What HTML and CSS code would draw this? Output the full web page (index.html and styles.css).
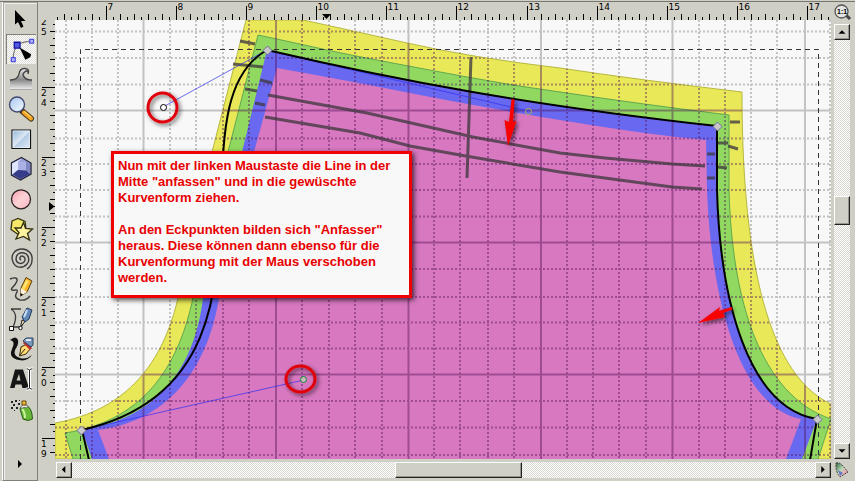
FILE: index.html
```html
<!DOCTYPE html>
<html lang="de">
<head>
<meta charset="utf-8">
<meta name="viewport" content="width=device-width, initial-scale=1">
<title>Kurvenform bearbeiten</title>
<link rel="stylesheet" href="styles.css">
</head>
<body>
<div class="app">
  <nav class="toolbox" aria-label="Werkzeuge">
    <button class="tool" type="button" aria-label="Auswahl"><svg viewBox="0 0 30 30"><path d="M9 6V20.500L12 18L15 24L17.500 22.500L15 17H19.500Z"/></svg></button>
    <button class="tool tool-active" type="button" aria-label="Knoten" aria-pressed="true"><svg viewBox="0 0 30 30"><path d="M6.500 23C7 12 12 7 23 6.500" fill="none" stroke="#777" stroke-width="1.300"/><path d="M4.500 23.500h4v4h-4zM23.500 4.500h4v4h-4z" fill="#b8b8f8" stroke="#5050e0" stroke-width="1.300"/><path d="M7.500 7.500h6v6h-6z" fill="#5058e0" stroke="#1010a0" stroke-width="1.300"/><path d="M13 13L25 20L24 23L19 25.500Z"/></svg></button>
    <button class="tool" type="button" aria-label="Verformen"><svg viewBox="0 0 30 30"><defs><linearGradient id="wave" x2="0" y2="1"><stop offset="0" stop-color="#f2f2f2"/><stop offset=".55" stop-color="#888"/><stop offset="1" stop-color="#eee"/></linearGradient></defs><path d="M4 25.500V16Q12 16 13 10Q14 4 19 4Q24 5 22 9Q22 6 19 8Q17 10 19 13Q21 16 26 16V25.500Z" fill="url(#wave)"/><path d="M4 16Q12 16 13 10Q14 4 19 4.500Q24 5 22 10M22 8Q20 6 19 8M19 8Q15 10 19 14Q21 16 26 16" fill="none" stroke="#444" stroke-width="1.400"/><path d="M4 25.500H26" stroke="#aaa"/></svg></button>
    <button class="tool" type="button" aria-label="Zoom"><svg viewBox="0 0 30 30"><defs><linearGradient id="lens" x2="1" y2="1"><stop offset="0" stop-color="#a8c8f0"/><stop offset="1" stop-color="#f4faff"/></linearGradient></defs><path d="M16 17L25 24.500" stroke="#493b20" stroke-width="6" stroke-linecap="round"/><path d="M18 18.500L25 24.500" stroke="#f8a820" stroke-width="4" stroke-linecap="round"/><path d="M18 17.500L25 23" stroke="#ffe080"/><circle cx="11" cy="10.500" r="7.500" fill="url(#lens)" stroke="#444a70" stroke-width="1.400"/></svg></button>
    <button class="tool" type="button" aria-label="Rechteck"><svg viewBox="0 0 30 30"><defs><linearGradient id="pane" x2="1" y2="1"><stop offset="0" stop-color="#8fb4d6"/><stop offset=".5" stop-color="#dfeaf6"/><stop offset=".52" stop-color="#b3cce4"/><stop offset="1" stop-color="#e4eef8"/></linearGradient></defs><path d="M6 6H24.500V24.500H6Z" fill="url(#pane)" stroke="#111" stroke-width="1.200"/><path d="M7 7H23.500V23.500H7Z" fill="none" stroke="#e8f2fc" stroke-width=".7"/></svg></button>
    <button class="tool" type="button" aria-label="3D-Box"><svg viewBox="0 0 30 30"><path d="M15.500 3.500L25 9V20L14.500 26L5.500 21V9Z" fill="#9ca4dc" stroke="#222238" stroke-width="1.300"/><path d="M15.500 4.500L6 9.500V20.500L12 16V8Z" fill="#dfe4ff"/><path d="M15.500 4.500L24 9.500V19.500L20 17V7.500Z" fill="#8088c4"/><path d="M12 8L20 8V17H12Z" fill="#aab2e4"/><path d="M12 16L20 16.500L24 20L14.500 25L6.500 20.500Z" fill="#363c88"/></svg></button>
    <button class="tool" type="button" aria-label="Ellipse"><svg viewBox="0 0 30 30"><defs><linearGradient id="rose" x2="1" y2="1"><stop offset="0" stop-color="#f79aa8"/><stop offset=".5" stop-color="#fcd2d6"/><stop offset="1" stop-color="#f9b4bd"/></linearGradient></defs><circle cx="15" cy="15.300" r="9.500" fill="url(#rose)" stroke="#2b2222" stroke-width="1.300"/></svg></button>
    <button class="tool" type="button" aria-label="Stern"><svg viewBox="0 0 30 30"><path d="M6 7L12 4.500L19 7.500L20 15L13 21L5 15.500Z" fill="#f4e86a" stroke="#333010" stroke-width="1.300"/><path d="M17.500 8.500L19.500 14.500L26.500 15L21.500 19.500L23.500 26L17.500 22.500L10 25L13 18.500L9 14L15 14Z" fill="#fff3a0" stroke="#333010" stroke-width="1.300"/></svg></button>
    <button class="tool" type="button" aria-label="Spirale"><svg viewBox="0 0 30 30"><path d="M15 16C13 15 14 12 16 12C19 12 20 16 18 18C15 21 10 19 10 15C10 10 14 8 18 9C23 10 24 17 21 20C17 25 9 24 7 18C4 11 9 5 16 5C22 5 27 10 26 16C26 20 24 23 21 25" fill="none" stroke="#3d3d3d" stroke-width="1.400"/></svg></button>
    <button class="tool" type="button" aria-label="Freihand"><svg viewBox="0 0 30 30"><path d="M4 5Q12 2 11 7Q10 10 6 14Q4 17 9 16Q13 15 10 20Q8 24 14 26Q20 27 24 22" fill="none" stroke="#3c3c3c" stroke-width="1.400"/><path d="M14.500 22L15 14L20 3.500L26 7L21 18Z" fill="#f9b428" stroke="#564010"/><path d="M20 6L16 14L18 16L23 7Z" fill="#ffe36c"/><path d="M15 14L21 18L14.500 22Z" fill="#fff2da"/><path d="M14.500 19L17 20.500L14.500 22.500Z"/></svg></button>
    <button class="tool" type="button" aria-label="Bézier"><svg viewBox="0 0 30 30"><path d="M5 5H15M5 5Q13 10 7 23H14Q18 21 17 16" fill="none" stroke="#3c3c3c" stroke-width="1.300"/><path d="M3.500 22.500h4v4h-4z" fill="#fff" stroke="#111"/><path d="M14.500 23L16 16L19 17.500Z" fill="#f7e3b3" stroke="#222"/><path d="M16 13L21 4L26 6L23 15L19 18Z" fill="#6288b8" stroke="#253a5c"/><path d="M18 13L21 6" stroke="#c6dcf3" stroke-width="2"/><circle cx="14.500" cy="24" r="1.700" fill="#fff" stroke="#111"/></svg></button>
    <button class="tool" type="button" aria-label="Kalligrafie"><svg viewBox="0 0 30 30"><path d="M4 6Q10 1 12 6Q13 10 9 16Q7 22 14 24Q20 26 26 21Q21 28 13 26Q2 24 6 15Q10 7 4 6Z" fill="#111"/><path d="M13.500 22L15 13L21 10L24 15L20 20Z" fill="#ffdb73" stroke="#3c2b09"/><path d="M14 21L19 15" stroke="#222"/><path d="M18 8L21 11L25 15" stroke="#c43030" stroke-width="3"/><path d="M17 7L20 4H27V11L25 13Z" fill="#7895ba" stroke="#30445f"/><path d="M20 6H25" stroke="#deebf7" stroke-width="2"/></svg></button>
    <button class="tool" type="button" aria-label="Text"><svg viewBox="0 0 30 30"><path d="M9 5.500H17L23 24H16.500L15.500 20.500H9.500L8.500 24H4ZM10.500 16.500H14.500L13 10Z" fill="#161616" fill-rule="evenodd"/><path d="M20 5H22L23.500 6L25 5H27M23.500 6V24M20 25H22L23.500 24L25 25H27" fill="none" stroke="#fff" stroke-width="3"/><path d="M20.500 5H22L23.500 6L25 5H26.500M23.500 6V24M20.500 25H22L23.500 24L25 25H26.500" fill="none" stroke="#222"/></svg></button>
    <button class="tool" type="button" aria-label="Sprühdose"><svg viewBox="0 0 30 30"><path d="M5 7h2v2h-2zM9 6h2v2h-2zM12 9h2v2h-2zM7 10h2v2h-2zM5 13h2v2h-2zM10 13h2v2h-2zM13 6h1v1h-1zM8 16h1v1h-1z" fill="#222"/><path d="M14 15Q15 11 21 12Q26 14 26.500 25Q22 28 17 25Z" fill="#68b838" stroke="#2b5b16"/><path d="M16 15Q19 18 19 24" stroke="#c7f49f" stroke-width="2" fill="none"/><path d="M15 13Q17 9 22 12L21 14Q18 12 15 15Z" fill="#eee" stroke="#555" stroke-width=".7"/><path d="M16 7H20V11H16Z" fill="#f0b52b" stroke="#664b10"/></svg></button>
    <button class="more" type="button" aria-label="Weitere Werkzeuge"><svg viewBox="0 0 30 30"><path d="M12 12L16 16L12 20Z"/></svg></button>
  </nav>

  <svg class="ruler-top" id="ruler-top" aria-label="Lineal horizontal"><path class="tick" d=""/><path d="M322 14H331L326.500 19Z"/></svg>
  <button class="corner" type="button" aria-label="Zoom 1:1"><svg viewBox="0 0 24 20"><path d="M14 14L19 19" stroke="#444" stroke-width="3"/><circle cx="10.500" cy="11.500" r="6.500" fill="#e4e4e0" stroke="#555" stroke-width="1.300"/><text x="6" y="14">1:1</text></svg></button>

  <svg class="ruler-left" id="ruler-left" aria-label="Lineal vertikal"><path class="tick" d=""/><path d="M49 202L54.500 206.500L49 211Z"/></svg>

  <main class="canvas">
    <svg class="drawing" viewBox="55 20 776 439" preserveAspectRatio="xMinYMin slice" role="img" aria-label="Schnittmuster">
      <defs>
        <path id="outer" d="M246 20H303Q340 28 407 43T560 68Q640 80 742 92C742 240 762 372 831 404V459H55V423C128 410 163 362 178 298L212 152Z"/>
        <g id="grid">
          <path class="minor" d="M66 20V459M92 20V459M118 20V459M170 20V459M196 20V459M223 20V459M249 20V459M302 20V459M329 20V459M355 20V459M382 20V459M434 20V459M460 20V459M488 20V459M514 20V459M567 20V459M593 20V459M619 20V459M646 20V459M699 20V459M725 20V459M751 20V459M777 20V459M830 20V459M55 31.500H831M55 58H831M55 84.500H831M55 138.500H831M55 164H831M55 190H831M55 216.500H831M55 269H831M55 297H831M55 322.500H831M55 348.500H831M55 401H831M55 427.500H831M55 455H831"/>
          <path class="major" d="M143.500 20V459M276 20V459M408.500 20V459M541 20V459M672.500 20V459M805 20V459M55 110.500H831M55 242.500H831M55 374.500H831"/>
        </g>
        <clipPath id="in-outer"><use href="#outer"/></clipPath>
        <filter id="shade" x="-50%" y="-50%" width="200%" height="200%"><feDropShadow dx="2" dy="2" stdDeviation="2" flood-opacity=".6"/></filter>
      </defs>
      <use href="#grid" class="paper-grid"/>
      <use href="#outer" class="seam-yellow"/>
      <path class="seam-green" d="M258 35Q300 44 327 50T467 77Q515 86 560 92Q640 104 729 115V190C732 300 760 395 831 419L818 459H73L65 433C150 420 180 358 193 298L228 152Z"/>
      <path class="seam-blue" d="M267 50C400 81 528 105 717 126V190C720 300 748 408 817 419L802 459H92L82 430C160 418 195 365 203 298L242 152Z"/>
      <path class="seam-pink" d="M277 68Q350 81 410 93T560 120T706 140L707 190C711 300 740 408 801 419L786 459H109L98 430C175 420 209 360 219 298L254 152Z"/>
      <g clip-path="url(#in-outer)"><use href="#grid" class="cloth-grid"/></g>
      <path class="stitch" d="M471 57L467 178M268 95L367 113L473 137L560 153L605 158L672 164L705 166M265 117L360 133L410 146L460 155L560 172L672 187L702 189M240 41L255 44M233 64L263 67M260 80L272 83M245 89L257 91M255 103L265 105M730 122H740M728 146L738 149M718 143H728M707 154H715M718 167L727 168M707 178H715"/>
      <path class="selection" d="M80.500 459V49.500H818.500V459"/>
      <path class="handle-line" d="M267 50L163 107M267 50L528 111M82 430L304 380"/>
      <path class="curve" d="M267 50C400 81 528 105 717 126V190C720 300 748 408 817 419L810 460M267 50C164 107 304 380 82 430L89 460"/>
      <g class="node"><path d="M267.500 46L272 50.500L267.500 55L263 50.500Z"/><path d="M717.500 122L722 126.500L717.500 131L713 126.500Z"/><path d="M817.500 415L822 419.500L817.500 424L813 419.500Z"/><path d="M81.500 426L86 430.500L81.500 435L77 430.500Z"/></g>
      <circle class="knob" cx="163.500" cy="107.500" r="3"/>
      <circle class="knob-green" cx="303.500" cy="379.500" r="3"/>
      <circle class="knob-olive" cx="528.500" cy="111.500" r="3"/>
      <g filter="url(#shade)">
        <circle class="ring" cx="162.500" cy="107.500" r="14.500"/>
        <ellipse class="ring" cx="300.500" cy="379" rx="14.500" ry="13"/>
        <path class="arrow" d="M511.500 99L514.500 99.500L513 122L516.500 121L508 146L504.500 120L509 122Z"/>
        <path class="arrow" d="M731.500 307L732.500 309.500L723 313L725 317L698 323L720 307L719 311Z"/>
      </g>
    </svg>
    <aside class="note">
      <p>Nun mit der linken Maustaste die Line in der<br>Mitte "anfassen" und in die gewüschte<br>Kurvenform ziehen.</p>
      <p>An den Eckpunkten bilden sich "Anfasser"<br>heraus. Diese können dann ebenso für die<br>Kurvenformung mit der Maus verschoben<br>werden.</p>
    </aside>
  </main>

  <div class="scroll scroll-y">
    <button class="step" type="button" aria-label="Nach oben"><svg viewBox="0 0 16 16"><path d="M4 10L8 6L12 10Z"/></svg></button>
    <div class="track y-before"></div><div class="thumb y-thumb"></div><div class="track y-after"></div>
    <button class="step" type="button" aria-label="Nach unten"><svg viewBox="0 0 16 16"><path d="M4 6L8 10L12 6Z"/></svg></button>
  </div>
  <div class="scroll scroll-x">
    <button class="step" type="button" aria-label="Nach links"><svg viewBox="0 0 16 16"><path d="M9.500 3.500L5.500 7.500L9.500 11.500Z"/></svg></button>
    <div class="track x-before"></div><div class="thumb x-thumb"></div><div class="track x-after"></div>
    <button class="step" type="button" aria-label="Nach rechts"><svg viewBox="0 0 16 16"><path d="M6 3.500L10 7.500L6 11.500Z"/></svg></button>
  </div>
  <button class="corner" type="button" aria-label="Farbmanagement"><svg viewBox="0 0 24 22"><defs><linearGradient id="gamut" x1="0" y1="0" x2="1" y2="1"><stop offset="0" stop-color="#285c36"/><stop offset=".45" stop-color="#b8d8b8"/><stop offset=".7" stop-color="#e8b0b0"/><stop offset="1" stop-color="#b02050"/></linearGradient></defs><path d="M5 4Q8 3 11 6L17 13L9 18Q4 12 5 4Z" fill="url(#gamut)" stroke="#444" stroke-dasharray="2 1"/><path d="M7 11L9 17L12 14Z" fill="#6878c8"/></svg></button>
</div>
<script src="rulers.js"></script>
</body>
</html>
```

FILE: styles.css
```css
* {
  box-sizing: border-box;
}

body {
  margin: 0;
  background: #d0cfc6;
  font-family: "Liberation Sans", Arial, sans-serif;
}

.app {
  display: grid;
  grid-template-columns: 38px 17px 1fr 24px;
  grid-template-rows: 20px 1fr 22px;
  height: 100vh;
  overflow: hidden;
  background: linear-gradient(#77776f, #77776f) 0 1px / 100% 1px no-repeat;
}

button {
  display: block;
  padding: 0;
  border: 0;
  background: none;
}

svg {
  display: block;
}

button svg {
  width: 100%;
  height: 100%;
}

.toolbox {
  grid-column: 1;
  grid-row: 1 / 4;
  display: flex;
  flex-direction: column;
  margin: 2px 0 0 2px;
  padding: 2px 0 2px 1px;
  border-left: 1px solid #fff;
  border-right: 1px solid #807f78;
  border-bottom: 1px solid #807f78;
  box-shadow: inset 1px 1px #a8a79f, inset 2px 2px #eeeeea;
}

.tool,
.more {
  flex: none;
  width: 30px;
  height: 30px;
  margin-left: 2px;
}

.tool-active {
  border-top: 1px solid #807f78;
  border-left: 1px solid #807f78;
  background: conic-gradient(#fff 25%, #dddcd6 0 50%, #fff 0 75%, #dddcd6 0) 0 0 / 2px 2px;
}

.more {
  margin-top: auto;
}

.ruler-top {
  grid-column: 2 / 4;
  grid-row: 1;
  width: 100%;
  height: 20px;
}

.ruler-left {
  grid-column: 2;
  grid-row: 2 / 4;
  width: 17px;
  height: 100%;
}

.tick {
  fill: none;
  stroke: #000;
  shape-rendering: crispEdges;
}

.ruler-top text,
.ruler-left text {
  font-family: "DejaVu Sans", sans-serif;
  font-size: 9px;
}

.corner text {
  font-size: 7px;
  font-weight: bold;
}

.canvas {
  position: relative;
  grid-column: 3;
  grid-row: 2;
  overflow: hidden;
  background: #f8f8f8;
}

.drawing {
  width: 100%;
  height: 100%;
}

.minor {
  fill: none;
  stroke-width: 2;
  stroke-dasharray: 2 2;
}

.major {
  fill: none;
  stroke-width: 2;
}

.paper-grid {
  stroke: #606060;
  opacity: .34;
}

.cloth-grid {
  stroke: #501058;
  opacity: .42;
}

.seam-yellow {
  fill: #e8e858;
  stroke: #b8b840;
}

.seam-green {
  fill: #90d860;
  stroke: #60a850;
}

.seam-blue {
  fill: #6868f0;
}

.seam-pink {
  fill: #d878c0;
}

.stitch {
  fill: none;
  stroke: #403840;
  stroke-opacity: .78;
  stroke-width: 3;
}

.selection {
  fill: none;
  stroke: #333;
  stroke-dasharray: 5 4;
}

.handle-line {
  fill: none;
  stroke: #3030f0;
  stroke-opacity: .7;
}

.curve {
  fill: none;
  stroke: #000;
  stroke-width: 2;
}

.node path {
  fill: #c8c8c8;
  stroke: #706898;
}

.knob {
  fill: #fff;
  stroke: #000;
}

.knob-green {
  fill: #c8b8c0;
  stroke: #108830;
}

.knob-olive {
  fill: none;
  stroke: #b0b050;
}

.ring {
  fill: none;
  stroke: #e00008;
  stroke-width: 3;
}

.arrow {
  fill: #f80000;
}

.note {
  position: absolute;
  left: 56px;
  top: 131px;
  padding: 4px;
  width: 301px;
  height: 147px;
  border: 3px solid #f00000;
  background: #f8f8f8;
  box-shadow: 2px 2px 5px rgba(0, 0, 0, .7);
  color: #e80000;
  font-size: 13px;
  font-weight: bold;
  line-height: 16px;
  white-space: nowrap;
}

.note p {
  margin: 0 0 16px;
}

.scroll {
  display: flex;
}

.scroll-y {
  grid-column: 4;
  grid-row: 2;
  flex-direction: column;
  width: 16px;
  margin: 4px 0 0 3px;
}

.scroll-x {
  grid-column: 3;
  grid-row: 3;
  height: 16px;
  margin: 3px 0 0 1px;
}

.step {
  flex: none;
  width: 16px;
  height: 16px;
}

.step,
.thumb {
  border: 1px solid;
  border-color: #fff #222 #222 #fff;
  background: #d0cfc6;
  box-shadow: inset -1px -1px #96958c;
}

.track {
  background: conic-gradient(#fff 25%, #d8d7d0 0 50%, #fff 0 75%, #d8d7d0 0) 0 0 / 2px 2px;
}

.y-before {
  flex: 157;
}

.y-thumb {
  flex: 27;
}

.y-after {
  flex: 219;
}

.x-before {
  flex: 324;
}

.x-thumb {
  flex: 125;
}

.x-after {
  flex: 294;
}

.corner {
  grid-column: 4;
  width: 24px;
  height: 100%;
}
```

FILE: rulers.js
```js
// Both rulers use the same scale: one unit is UNIT pixels, split into ten.
const UNIT = 70.1;
const NS = "http://www.w3.org/2000/svg";

function label(svg, x, y, value) {
  const text = document.createElementNS(NS, "text");
  text.setAttribute("x", x);
  text.setAttribute("y", y);
  text.textContent = value;
  svg.append(text);
}

function tickLength(i) {
  return i % 10 === 0 ? 14 : i % 2 === 0 ? 6 : 3;
}

const topRuler = document.getElementById("ruler-top");
const leftRuler = document.getElementById("ruler-left");
const shift = (svg, x, y) => svg.querySelector("path:last-of-type").setAttribute("transform", `translate(${x} ${y})`);
shift(topRuler, -38, 0);
shift(leftRuler, -38, -20);

let d = "";
for (let i = -7; i * UNIT / 10 + 68.5 < topRuler.clientWidth; i++) {
  const x = Math.floor(68.5 + i * UNIT / 10) + 0.5;
  d += `M${x} 20v${-tickLength(i)}`;
  if (i % 10 === 0) label(topRuler, x + 1, 10, 7 + i / 10);
}
topRuler.querySelector(".tick").setAttribute("d", d);

d = "";
for (let i = 1; i * UNIT / 10 - 2.5 < leftRuler.clientHeight - 22; i++) {
  const y = Math.floor(i * UNIT / 10 - 2.5) + 0.5;
  d += `M17 ${y}h${-(i % 10 === 0 ? 13 : i % 2 === 0 ? 5 : 2)}`;
  if (i % 10 === 0) {
    const value = String(25 - i / 10);
    label(leftRuler, 3, y + 8, value[0]);
    label(leftRuler, 3, y + 18, value[1]);
  }
}
leftRuler.querySelector(".tick").setAttribute("d", d);
label(leftRuler, 3, 5, "2");
label(leftRuler, 3, 15, "5");
```
